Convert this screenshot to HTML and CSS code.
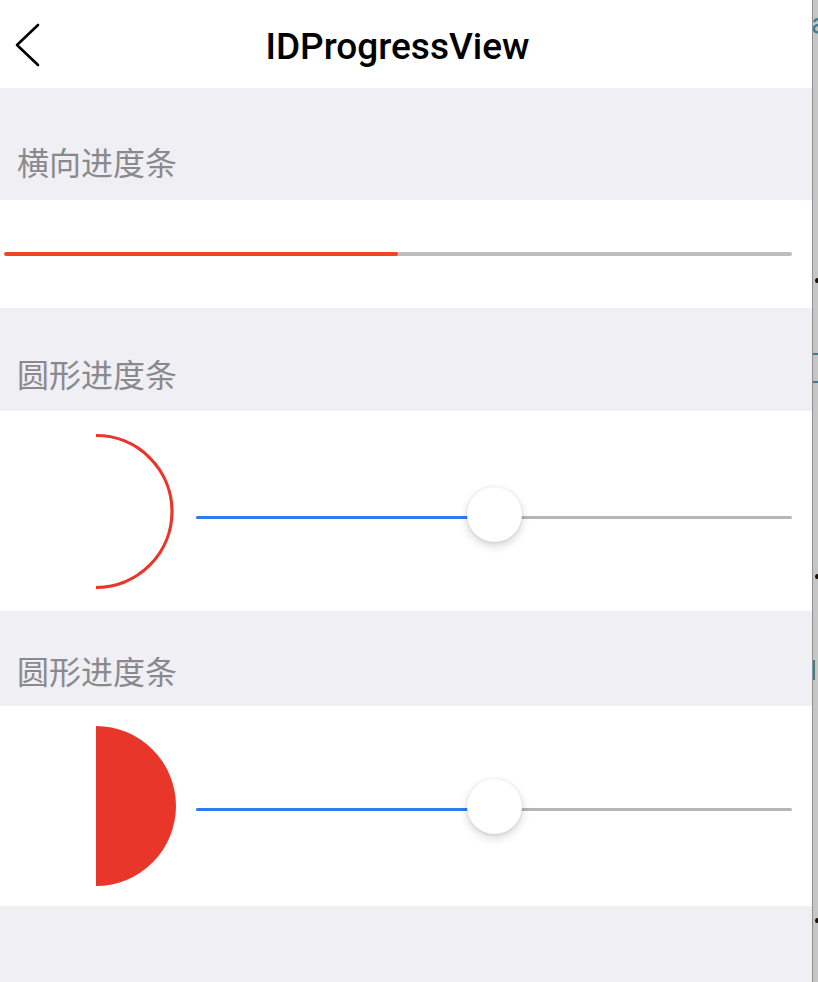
FILE: index.html
```html
<!DOCTYPE html>
<html lang="zh">
<head>
<meta charset="utf-8">
<title>IDProgressView</title>
<link rel="stylesheet" href="styles.css">
</head>
<body>
<div class="screen">
  <div class="phone">
    <header class="nav">
      <svg class="back" width="30" height="46" viewBox="0 0 30 46">
        <polyline points="24,3 3,23 24,43" fill="none" stroke="#000" stroke-width="2.6" stroke-linecap="round" stroke-linejoin="round"/>
      </svg>
      <h1 class="title">IDProgressView</h1>
    </header>

    <div class="label label-1">横向进度条</div>
    <div class="panel panel-bar">
      <div class="bar"><div class="bar-fill" style="width:50%"></div></div>
    </div>

    <div class="label label-2">圆形进度条</div>
    <div class="panel panel-row">
      <svg class="gauge" width="196" height="200" viewBox="0 0 196 200">
        <path d="M96 24.5 A76 76 0 0 1 96 176.5" fill="none" stroke="#e9362a" stroke-width="3.2"/>
      </svg>
      <div class="slider">
        <div class="slider-fill" style="width:50.2%"></div>
        <div class="thumb" style="left:50.2%"></div>
      </div>
    </div>

    <div class="label label-3">圆形进度条</div>
    <div class="panel panel-row">
      <svg class="gauge" width="196" height="200" viewBox="0 0 196 200">
        <path d="M96 20 A80 80 0 0 1 96 180 Z" fill="#e9362a"/>
      </svg>
      <div class="slider slider-2">
        <div class="slider-fill" style="width:50.2%"></div>
        <div class="thumb" style="left:50.2%"></div>
      </div>
    </div>

    <div class="footer-space"></div>
  </div>
  <div class="edge">
    <svg class="mark" width="5" height="18" viewBox="0 0 5 18">
      <path d="M5 3 A5 5 0 0 0 1 6 M5 9 A4 4 0 0 0 1 13 A3 3 0 0 0 5 16" fill="none" stroke="#3a7d95" stroke-width="2.4"/>
    </svg>
    <span class="dot dot-1"></span>
    <span class="tick tick-1"></span>
    <span class="tick tick-2"></span>
    <span class="dot dot-2"></span>
    <span class="tick tick-3"></span>
    <span class="dot dot-3"></span>
  </div>
</div>
</body>
</html>
```

FILE: styles.css
```css
html, body {
  margin: 0;
  padding: 0;
  background: #efeff4;
}

.screen {
  display: flex;
  width: 818px;
  height: 982px;
  overflow: hidden;
}

.phone {
  width: 812px;
  flex: none;
  display: flex;
  flex-direction: column;
  background: #efeff4;
}

.nav {
  height: 88px;
  background: #fff;
  display: flex;
  align-items: center;
  justify-content: center;
  position: relative;
  padding-right: 17px;
  box-sizing: border-box;
}

.back {
  position: absolute;
  left: 14px;
  top: 22px;
}

.title {
  margin: 0;
  font-family: Roboto, "Liberation Sans", Arial, sans-serif;
  font-weight: 500;
  font-size: 37px;
  color: #000;
  letter-spacing: 0;
  line-height: 1;
  padding-top: 4px;
}

.label {
  box-sizing: border-box;
  display: flex;
  align-items: flex-end;
  padding-left: 17px;
  padding-bottom: 23px;
  font-family: "Noto Sans CJK SC", "Noto Sans", sans-serif;
  font-size: 32px;
  line-height: 32px;
  color: #8a8a8e;
}

.label-1 { height: 112px; }
.label-2 { height: 103px; padding-bottom: 22px; }
.label-3 { height: 95px; padding-bottom: 20px; }

.panel {
  background: #fff;
}

.panel-bar {
  height: 108px;
  box-sizing: border-box;
  padding: 52px 20px 0 4px;
}

.bar {
  height: 4px;
  border-radius: 2px;
  background: #bdbdbd;
  position: relative;
  overflow: hidden;
}

.bar-fill {
  height: 100%;
  background: #ee4526;
  border-radius: 2px;
}

.panel-row {
  height: 200px;
  display: flex;
  align-items: center;
  padding-right: 20px;
}

.gauge {
  flex: none;
  display: block;
}

.slider {
  flex: 1;
  height: 3px;
  border-radius: 2px;
  background: #b6b6b6;
  position: relative;
  margin-top: 12px;
}

.slider-2 {
  margin-top: 6px;
}

.slider-fill {
  height: 100%;
  border-radius: 2px;
  background: #2f7bf6;
}

.thumb {
  position: absolute;
  top: 50%;
  width: 55px;
  height: 55px;
  margin-left: -28px;
  margin-top: -30px;
  border-radius: 50%;
  background: #fff;
  box-shadow: 0 4px 10px rgba(0, 0, 0, 0.16), 0 0.5px 3px rgba(0, 0, 0, 0.12);
}

.footer-space {
  flex: 1;
  background: #efeff4;
}

.edge {
  width: 6px;
  flex: none;
  background: #c6c6c6;
  border-left: 1px solid #8f8f8f;
  box-sizing: border-box;
  position: relative;
}

.mark {
  position: absolute;
  left: 0;
  top: 16px;
  display: block;
}

.dot {
  position: absolute;
  left: 2px;
  width: 4px;
  height: 5px;
  border-radius: 50%;
  background: #1a1206;
}

.dot-1 { top: 278px; }
.dot-2 { top: 574px; }
.dot-3 { top: 918px; }

.tick {
  position: absolute;
  left: 0;
  width: 5px;
  background: #3a7d95;
}

.tick-1 { top: 353px; height: 2px; }
.tick-2 { top: 381px; height: 2px; }
.tick-3 { top: 660px; height: 20px; width: 2px; }
```
